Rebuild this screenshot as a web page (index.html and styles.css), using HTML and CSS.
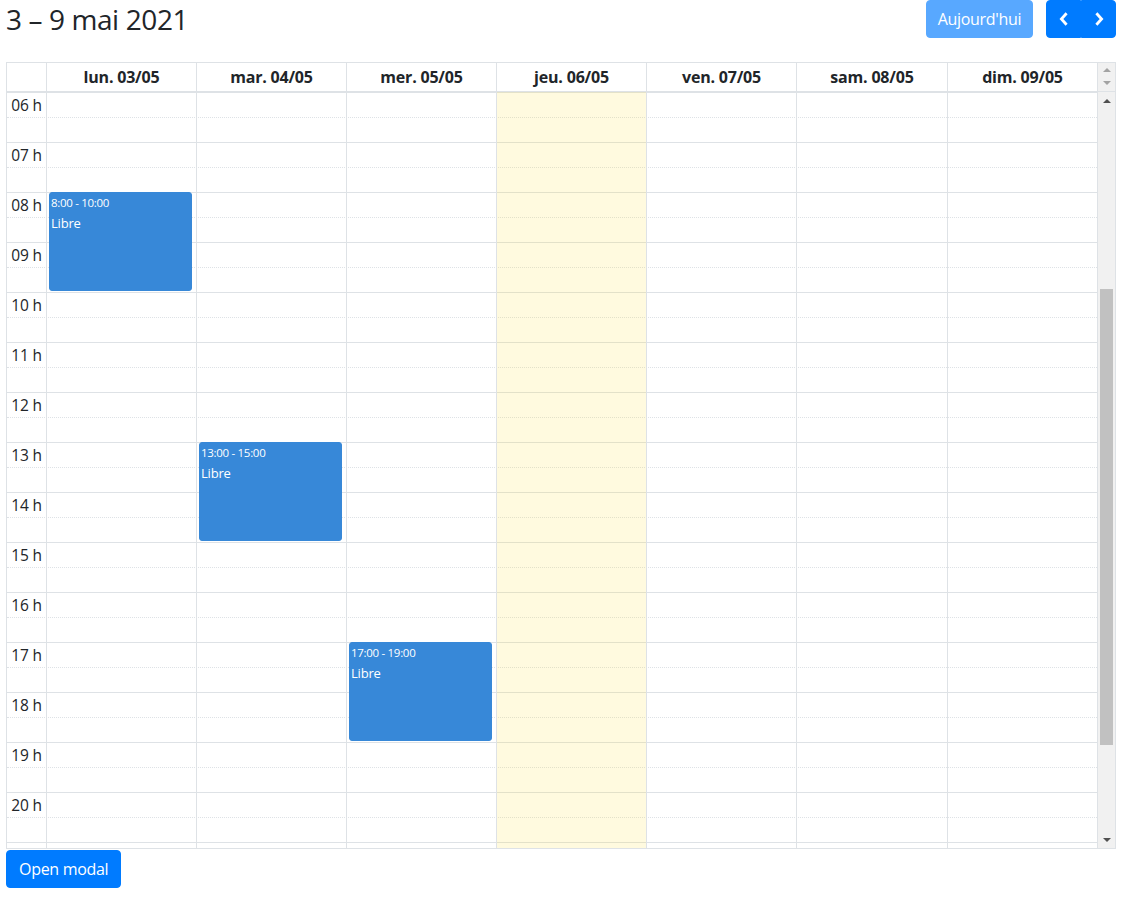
FILE: index.html
```html
<!DOCTYPE html>
<html lang="fr">
<head>
<meta charset="utf-8">
<title>Calendrier</title>
<link rel="stylesheet" href="styles.css">
</head>
<body>
<div class="page">
  <div class="toolbar">
    <h2 class="title">3 – 9 mai 2021</h2>
    <div class="tools">
      <button class="btn btn-primary btn-disabled" type="button">Aujourd'hui</button>
      <div class="btn-group">
        <button class="btn btn-primary btn-icon" type="button" aria-label="prev">
          <svg width="12" height="16" viewBox="0 0 12 16"><path d="M8.6 2.2 L3.4 8 L8.6 13.8" fill="none" stroke="#fff" stroke-width="2.8" stroke-linejoin="miter" stroke-linecap="butt"/></svg>
        </button>
        <button class="btn btn-primary btn-icon" type="button" aria-label="next">
          <svg width="12" height="16" viewBox="0 0 12 16"><path d="M3.4 2.2 L8.6 8 L3.4 13.8" fill="none" stroke="#fff" stroke-width="2.8" stroke-linejoin="miter" stroke-linecap="butt"/></svg>
        </button>
      </div>
    </div>
  </div>

  <div class="cal">
    <div class="cal-head">
      <div class="head-axis"></div>
      <div class="head-cell">lun. 03/05</div>
      <div class="head-cell">mar. 04/05</div>
      <div class="head-cell">mer. 05/05</div>
      <div class="head-cell">jeu. 06/05</div>
      <div class="head-cell">ven. 07/05</div>
      <div class="head-cell">sam. 08/05</div>
      <div class="head-cell">dim. 09/05</div>
      <div class="head-gutter">
        <span class="arrow-up light"></span>
        <span class="arrow-down light"></span>
      </div>
    </div>

    <div class="cal-body">
      <div class="grid-area">
        <div class="slats">
          <div class="slot"><div class="slot-label">06 h</div><div class="slot-lane"></div></div>
          <div class="slot minor"><div class="slot-label"></div><div class="slot-lane"></div></div>
          <div class="slot"><div class="slot-label">07 h</div><div class="slot-lane"></div></div>
          <div class="slot minor"><div class="slot-label"></div><div class="slot-lane"></div></div>
          <div class="slot"><div class="slot-label">08 h</div><div class="slot-lane"></div></div>
          <div class="slot minor"><div class="slot-label"></div><div class="slot-lane"></div></div>
          <div class="slot"><div class="slot-label">09 h</div><div class="slot-lane"></div></div>
          <div class="slot minor"><div class="slot-label"></div><div class="slot-lane"></div></div>
          <div class="slot"><div class="slot-label">10 h</div><div class="slot-lane"></div></div>
          <div class="slot minor"><div class="slot-label"></div><div class="slot-lane"></div></div>
          <div class="slot"><div class="slot-label">11 h</div><div class="slot-lane"></div></div>
          <div class="slot minor"><div class="slot-label"></div><div class="slot-lane"></div></div>
          <div class="slot"><div class="slot-label">12 h</div><div class="slot-lane"></div></div>
          <div class="slot minor"><div class="slot-label"></div><div class="slot-lane"></div></div>
          <div class="slot"><div class="slot-label">13 h</div><div class="slot-lane"></div></div>
          <div class="slot minor"><div class="slot-label"></div><div class="slot-lane"></div></div>
          <div class="slot"><div class="slot-label">14 h</div><div class="slot-lane"></div></div>
          <div class="slot minor"><div class="slot-label"></div><div class="slot-lane"></div></div>
          <div class="slot"><div class="slot-label">15 h</div><div class="slot-lane"></div></div>
          <div class="slot minor"><div class="slot-label"></div><div class="slot-lane"></div></div>
          <div class="slot"><div class="slot-label">16 h</div><div class="slot-lane"></div></div>
          <div class="slot minor"><div class="slot-label"></div><div class="slot-lane"></div></div>
          <div class="slot"><div class="slot-label">17 h</div><div class="slot-lane"></div></div>
          <div class="slot minor"><div class="slot-label"></div><div class="slot-lane"></div></div>
          <div class="slot"><div class="slot-label">18 h</div><div class="slot-lane"></div></div>
          <div class="slot minor"><div class="slot-label"></div><div class="slot-lane"></div></div>
          <div class="slot"><div class="slot-label">19 h</div><div class="slot-lane"></div></div>
          <div class="slot minor"><div class="slot-label"></div><div class="slot-lane"></div></div>
          <div class="slot"><div class="slot-label">20 h</div><div class="slot-lane"></div></div>
          <div class="slot minor"><div class="slot-label"></div><div class="slot-lane"></div></div>
          <div class="slot"><div class="slot-label"></div><div class="slot-lane"></div></div>
        </div>

        <div class="cols">
          <div class="col-axis"></div>
          <div class="col">
            <div class="event" style="top:100px;height:99px">
              <div class="event-time">8:00 - 10:00</div>
              <div class="event-title">Libre</div>
            </div>
          </div>
          <div class="col">
            <div class="event" style="top:350px;height:99px">
              <div class="event-time">13:00 - 15:00</div>
              <div class="event-title">Libre</div>
            </div>
          </div>
          <div class="col">
            <div class="event" style="top:550px;height:99px">
              <div class="event-time">17:00 - 19:00</div>
              <div class="event-title">Libre</div>
            </div>
          </div>
          <div class="col today"></div>
          <div class="col"></div>
          <div class="col"></div>
          <div class="col"></div>
        </div>
      </div>

      <div class="scrollbar">
        <div class="sb-btn"><span class="arrow-up"></span></div>
        <div class="sb-thumb"></div>
        <div class="sb-btn sb-btn-bottom"><span class="arrow-down"></span></div>
      </div>
    </div>
  </div>

  <button class="btn btn-primary btn-modal" type="button">Open modal</button>
</div>
</body>
</html>
```

FILE: styles.css
```css
* { box-sizing: border-box; }

html, body {
  margin: 0;
  padding: 0;
  background: #fff;
}

body {
  font-family: "Open Sans", "Noto Sans", "Liberation Sans", sans-serif;
  font-size: 16px;
  line-height: 1.5;
  color: #212529;
}

.page {
  width: 1110px;
  margin-left: 6px;
}

/* Toolbar */
.toolbar {
  display: flex;
  justify-content: space-between;
  align-items: center;
  height: 38px;
  margin-bottom: 24px;
}

.title {
  margin: 0;
  font-size: 28px;
  font-weight: 400;
  line-height: 1.2;
  letter-spacing: -0.4px;
  padding-top: 2px;
}

.tools {
  display: flex;
  align-items: center;
  gap: 13px;
}

.btn {
  font-family: inherit;
  font-size: 16px;
  line-height: 24px;
  padding: 6px 12px;
  border: 1px solid transparent;
  border-radius: 4px;
  cursor: pointer;
  letter-spacing: -0.3px;
}

.btn-primary {
  background: #007bff;
  border-color: #007bff;
  color: #fff;
}

.btn-disabled {
  opacity: 0.65;
  cursor: default;
  width: 107px;
  padding: 6px 0;
}

.btn-group {
  display: flex;
}

.btn-icon {
  width: 35px;
  height: 38px;
  padding: 0;
  display: flex;
  align-items: center;
  justify-content: center;
}

.btn-group .btn-icon:first-child {
  border-top-right-radius: 0;
  border-bottom-right-radius: 0;
}

.btn-group .btn-icon:last-child {
  border-top-left-radius: 0;
  border-bottom-left-radius: 0;
}

/* Calendar */
.cal {
  border: 1px solid #dee2e6;
  font-size: 16px;
}

.cal-head {
  display: grid;
  grid-template-columns: 39px 150px 150px 150px 150px 150px 151px 150px 18px;
  height: 29px;
  border-bottom: 1px solid #dee2e6;
}

.head-cell {
  border-left: 1px solid #dee2e6;
  font-weight: 700;
  font-size: 16px;
  text-align: center;
  line-height: 28px;
  letter-spacing: -0.2px;
}

.head-gutter {
  border-left: 1px solid #dee2e6;
  background: #f1f1f1;
  display: flex;
  flex-direction: column;
  align-items: center;
  padding-top: 5px;
  gap: 9px;
}

.arrow-up, .arrow-down {
  display: block;
  width: 0;
  height: 0;
  border-left: 4px solid transparent;
  border-right: 4px solid transparent;
}

.arrow-up { border-bottom: 4px solid #505050; }
.arrow-down { border-top: 4px solid #505050; }
.arrow-up.light { border-bottom-color: #a3a3a3; }
.arrow-down.light { border-top-color: #a3a3a3; }

.cal-body {
  display: flex;
  height: 756px;
}

.grid-area {
  position: relative;
  width: 1090px;
  overflow: hidden;
}

.slot {
  display: flex;
  height: 25px;
  border-top: 1px solid #dee2e6;
}

.slot.minor {
  border-top-style: dotted;
}

.slot-label {
  width: 39px;
  text-align: right;
  padding-right: 4px;
  font-size: 15.5px;
  line-height: 24px;
  letter-spacing: -0.1px;
}

.slot-lane {
  flex: 1;
}

.cols {
  position: absolute;
  inset: 0;
  display: grid;
  grid-template-columns: 39px 150px 150px 150px 150px 150px 151px 150px;
}

.col {
  position: relative;
  border-left: 1px solid #dee2e6;
}

.col.today {
  background: rgba(255, 220, 40, 0.15);
}

.event {
  position: absolute;
  left: 2px;
  right: 4px;
  background: #3788d8;
  border: 1px solid #3788d8;
  border-radius: 3px;
  color: #fff;
  padding: 0 1px;
  overflow: hidden;
}

.event-time {
  font-size: 11.5px;
  line-height: 16px;
  margin-top: 2px;
  letter-spacing: -0.3px;
  white-space: nowrap;
}

.event-title {
  font-size: 13px;
  line-height: 18px;
  margin-top: 3px;
  letter-spacing: -0.2px;
}

/* Fake scrollbar */
.scrollbar {
  width: 18px;
  border-left: 1px solid #dee2e6;
  background: #f1f1f1;
  display: flex;
  flex-direction: column;
}

.sb-btn {
  height: 17px;
  display: flex;
  align-items: center;
  justify-content: center;
}

.sb-btn-bottom {
  margin-top: auto;
}

.sb-thumb {
  margin: 180px 2px 0;
  height: 456px;
  background: #c1c1c1;
}

.btn-modal {
  display: block;
  margin-top: 1px;
  padding: 6px 12px;
}
```
